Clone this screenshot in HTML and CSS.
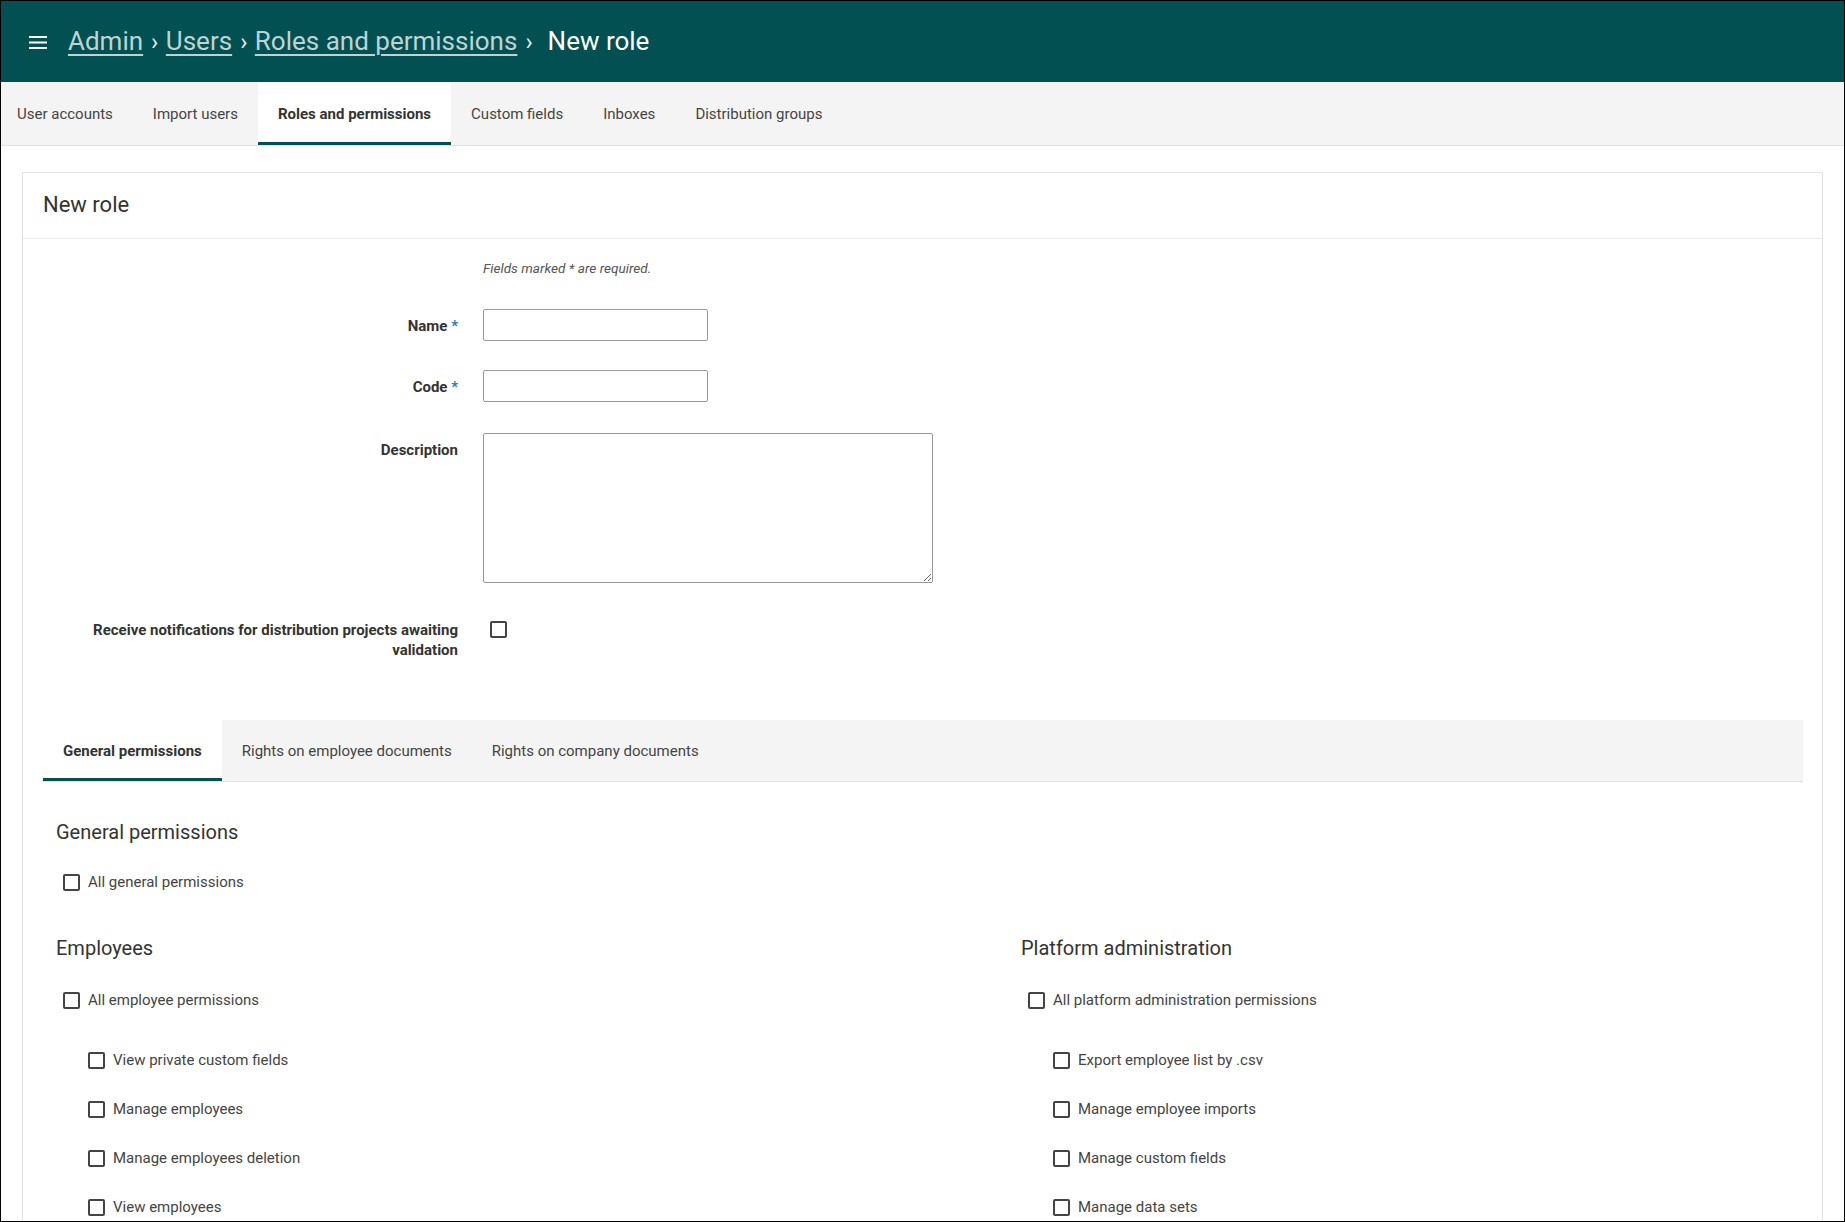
FILE: index.html
```html
<!DOCTYPE html>
<html lang="en">
<head>
<meta charset="utf-8">
<title>New role</title>
<link rel="stylesheet" href="styles.css">
</head>
<body>
<div class="frame">
  <header class="topbar">
    <button class="menu-btn" aria-label="Menu">
      <svg width="18" height="13" viewBox="0 0 18 13"><rect x="0" y="0" width="18" height="2" fill="#fff"/><rect x="0" y="5.5" width="18" height="2" fill="#fff"/><rect x="0" y="11" width="18" height="2" fill="#fff"/></svg>
    </button>
    <nav class="crumbs">
      <a href="#" class="crumb-link">Admin</a><span class="sep">›</span><a href="#" class="crumb-link">Users</a><span class="sep">›</span><a href="#" class="crumb-link">Roles and permissions</a><span class="sep">›</span><span class="crumb-current">New role</span>
    </nav>
  </header>

  <nav class="tabs">
    <a href="#" class="tab">User accounts</a>
    <a href="#" class="tab">Import users</a>
    <a href="#" class="tab active">Roles and permissions</a>
    <a href="#" class="tab">Custom fields</a>
    <a href="#" class="tab">Inboxes</a>
    <a href="#" class="tab">Distribution groups</a>
  </nav>

  <main class="content">
    <section class="card">
      <div class="card-head">New role</div>
      <div class="card-body">
        <div class="form-row note-row">
          <div class="form-label"></div>
          <div class="form-control"><p class="note">Fields marked * are required.</p></div>
        </div>
        <div class="form-row name-row">
          <label class="form-label line32">Name <span class="req">*</span></label>
          <div class="form-control"><input class="text-input" type="text"></div>
        </div>
        <div class="form-row code-row">
          <label class="form-label line32">Code <span class="req">*</span></label>
          <div class="form-control"><input class="text-input" type="text"></div>
        </div>
        <div class="form-row desc-row">
          <label class="form-label desc-label">Description</label>
          <div class="form-control"><textarea class="text-area"></textarea></div>
        </div>
        <div class="form-row notif-row">
          <label class="form-label notif-label">Receive notifications for distribution projects awaiting validation</label>
          <div class="form-control"><span class="box notif-box"></span></div>
        </div>

        <div class="subtabs">
          <a href="#" class="subtab active">General permissions</a>
          <a href="#" class="subtab">Rights on employee documents</a>
          <a href="#" class="subtab">Rights on company documents</a>
        </div>

        <div class="perm-body">
          <h3 class="perm-title first">General permissions</h3>
          <div class="check-row all-row"><span class="box"></span><span>All general permissions</span></div>

          <div class="perm-grid">
            <div class="perm-group">
              <h3 class="perm-title group-title">Employees</h3>
              <div class="check-row all-row"><span class="box"></span><span>All employee permissions</span></div>
              <div class="sub-list">
                <div class="check-row sub-row"><span class="box"></span><span>View private custom fields</span></div>
                <div class="check-row sub-row"><span class="box"></span><span>Manage employees</span></div>
                <div class="check-row sub-row"><span class="box"></span><span>Manage employees deletion</span></div>
                <div class="check-row sub-row"><span class="box"></span><span>View employees</span></div>
              </div>
            </div>
            <div class="perm-group">
              <h3 class="perm-title group-title">Platform administration</h3>
              <div class="check-row all-row"><span class="box"></span><span>All platform administration permissions</span></div>
              <div class="sub-list">
                <div class="check-row sub-row"><span class="box"></span><span>Export employee list by .csv</span></div>
                <div class="check-row sub-row"><span class="box"></span><span>Manage employee imports</span></div>
                <div class="check-row sub-row"><span class="box"></span><span>Manage custom fields</span></div>
                <div class="check-row sub-row"><span class="box"></span><span>Manage data sets</span></div>
              </div>
            </div>
          </div>
        </div>
      </div>
    </section>
  </main>
</div>
</body>
</html>
```

FILE: styles.css
```css
* { box-sizing: border-box; }
html, body { margin: 0; padding: 0; }
body {
  font-family: Roboto, "Liberation Sans", Arial, sans-serif;
  color: #444;
  background: #fff;
}
.frame {
  height: 1222px;
  border: 1px solid #000;
  overflow: hidden;
  background: #fff;
}

/* Top bar */
.topbar {
  height: 81px;
  background: #025051;
  display: flex;
  align-items: center;
  padding-left: 28px;
}
.menu-btn {
  background: none;
  border: 0;
  padding: 0;
  width: 18px;
  height: 13px;
  display: flex;
  margin-right: 21px;
  margin-top: 1px;
}
.crumbs {
  font-size: 26px;
  line-height: 32px;
  color: #fff;
  display: flex;
  align-items: baseline;
}
.crumb-link {
  color: #bcd4d4;
  text-decoration: underline;
  text-decoration-thickness: 2px;
  text-underline-offset: 4px;
}
.sep {
  color: #e6eeee;
  margin: 0 7.5px 0 8px;
  font-size: 24px;
}
.crumb-current { color: #fff; margin-left: 7.5px; }

/* Main tabs */
.tabs {
  height: 64px;
  background: #f4f4f4;
  border-bottom: 1px solid #e0e0e0;
  display: flex;
}
.tab {
  display: flex;
  align-items: center;
  padding: 0 20px;
  font-size: 15px;
  color: #444;
  text-decoration: none;
  height: 63px;
}
.tab:first-child { padding-left: 16px; }
.tab.active {
  background: #fff;
  color: #333;
  font-weight: 700;
  box-shadow: inset 0 -3px 0 #025051;
}

/* Content / card */
.content { padding: 26px 21px 0; }
.card {
  border: 1px solid #e3e3e3;
  background: #fff;
  min-height: 1200px;
}
.card-head {
  font-size: 22px;
  line-height: 26px;
  color: #333;
  padding: 19px 20px 20px;
  border-bottom: 1px solid #e8e8e8;
}
.card-body { padding: 0 19px 0 20px; }

.form-row { display: flex; }
.form-label {
  width: 440px;
  flex: none;
  padding-right: 25px;
  text-align: right;
  font-weight: 700;
  font-size: 15px;
  color: #333;
}
.form-control { flex: 1; }
.line32 { line-height: 32px; padding-top: 1px; }
.req { color: #2a7fb0; font-weight: 700; }
.note {
  margin: 0;
  padding-top: 20px;
  font-size: 13.6px;
  line-height: 18px;
  font-style: italic;
  color: #555;
}
.name-row { margin-top: 32px; }
.code-row { margin-top: 28px; }
.desc-row { margin-top: 30px; }
.notif-row { margin-top: 37px; }
.text-input {
  display: block;
  width: 225px;
  height: 32px;
  border: 1px solid #9a9a9a;
  border-radius: 2px;
  font: inherit;
  padding: 4px 8px;
  background: #fff;
}
.text-area {
  display: block;
  width: 450px;
  height: 150px;
  border: 1px solid #9a9a9a;
  border-radius: 2px;
  font: inherit;
  background: #fff;
  resize: both;
}
.desc-label { line-height: 20px; padding-top: 7px; }
.notif-label { line-height: 20px; }

.box {
  display: inline-block;
  width: 17px;
  height: 17px;
  border: 2px solid #444;
  border-radius: 2px;
  flex: none;
  background: #fff;
}
.notif-box { margin-left: 7px; margin-top: 1px; }

/* Sub tabs */
.subtabs {
  margin-top: 60px;
  height: 62px;
  background: #f4f4f4;
  border-bottom: 1px solid #e0e0e0;
  display: flex;
}
.subtab {
  display: flex;
  align-items: center;
  padding: 0 20px;
  height: 61px;
  font-size: 15px;
  color: #444;
  text-decoration: none;
}
.subtab.active {
  background: #fff;
  color: #333;
  font-weight: 700;
  box-shadow: inset 0 -3px 0 #025051;
}

/* Permissions */
.perm-body { padding: 0 13px; }
.perm-title {
  margin: 0;
  font-size: 20px;
  line-height: 24px;
  font-weight: 400;
  color: #333;
}
.perm-title.first { margin-top: 38px; }
.group-title { margin-top: 42px; }
.check-row {
  display: flex;
  align-items: center;
  gap: 8px;
  height: 24px;
  font-size: 15px;
  color: #444;
}
.check-row .box { margin-left: 7px; }
.all-row { margin-top: 26px; }
.perm-grid {
  display: grid;
  grid-template-columns: 965px 1fr;
}
.perm-group .all-row { margin-top: 28px; }
.sub-list { padding-left: 25px; margin-top: 36px; }
.sub-row + .sub-row { margin-top: 25px; }
```
